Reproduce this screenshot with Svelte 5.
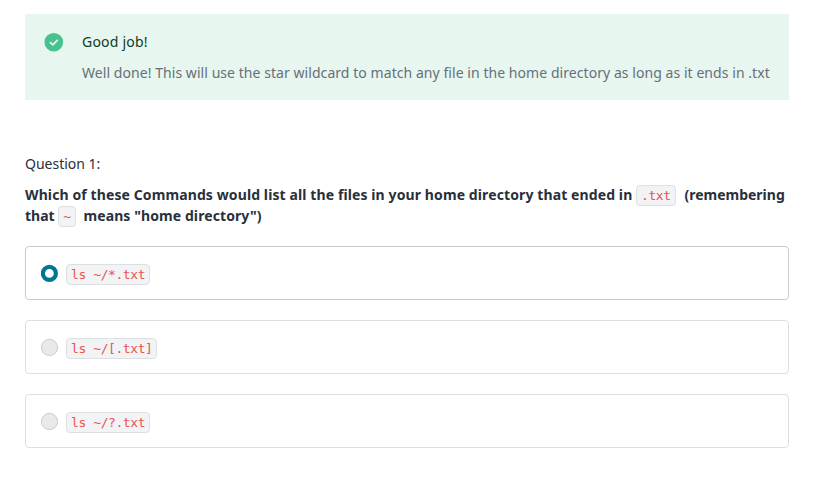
<script>
  const answers = [
    { code: 'ls ~/*.txt', selected: true },
    { code: 'ls ~/[.txt]', selected: false },
    { code: 'ls ~/?.txt', selected: false }
  ];
</script>

<main>
  <section class="feedback">
    <svg class="check" viewBox="0 0 20 20" aria-hidden="true">
      <circle cx="9.8" cy="10.2" r="9.3" fill="#46c28e" />
      <path d="M5.9 10.2 8.8 12.9 13.7 7.9" fill="none" stroke="#e7f6ef" stroke-width="1.7" />
    </svg>
    <div>
      <p class="title">Good job!</p>
      <p class="detail">Well done! This will use the star wildcard to match any file in the home directory as long as it ends in .txt</p>
    </div>
  </section>

  <p class="number">Question 1:</p>
  <p class="prompt">
    <span class="first">Which of these Commands would list all the files in your home directory that ended in</span>
    <code>.txt</code>&nbsp; <span class="after">(remembering</span><br />that <code>~</code>&nbsp; <span class="means">means "home directory")</span>
  </p>

  <div class="answers">
    {#each answers as answer}
      <div class="answer" class:selected={answer.selected}>
        <svg class="radio" viewBox="0 0 18 18" aria-hidden="true">
          {#if answer.selected}
            <circle cx="8.4" cy="9.4" r="6.5" fill="#fff" stroke="#007791" stroke-width="4.2" />
          {:else}
            <circle cx="8.5" cy="9.5" r="8.1" fill="#e8e9eb" stroke="#cacbcc" />
          {/if}
        </svg>
        <code>{answer.code}</code>
      </div>
    {/each}
  </div>
</main>

<style>
  :global(body) {
    background: #fff;
  }
  main {
    box-sizing: border-box;
    width: 828px;
    height: 484px;
    padding: 14px 39px 0 25px;
    font: 14px/21px 'Noto Sans', 'Open Sans', sans-serif;
    color: #29303b;
  }
  p {
    margin: 0;
    white-space: nowrap;
  }
  .feedback {
    display: flex;
    box-sizing: border-box;
    height: 86px;
    padding: 17px 19px 0;
    background: #e7f6ef;
  }
  .check {
    flex: none;
    width: 20px;
    height: 20px;
    margin: 1px 18px 0 0;
  }
  .title {
    color: #0c3c26;
    letter-spacing: 0.22px;
  }
  .detail {
    margin-top: 10px;
    color: #686f7a;
    letter-spacing: 0.058px;
  }
  .number {
    margin-top: 53px;
  }
  .prompt {
    margin-top: 10px;
    font-weight: 700;
  }
  .first {
    letter-spacing: 0.106px;
  }
  .after {
    margin-left: 1.5px;
  }
  .means {
    margin-left: 0.5px;
    letter-spacing: 0.09px;
  }
  code {
    display: inline-block;
    box-sizing: border-box;
    height: 21px;
    padding: 0 4px;
    border: 1px solid #dedfe0;
    border-radius: 4px;
    background: #f2f3f5;
    color: #ec5252;
    font: 400 13px/19px 'DejaVu Sans Mono', monospace;
    letter-spacing: -0.42px;
    vertical-align: top;
  }
  .prompt code {
    margin: 1px 0 -1px;
  }
  .answers {
    display: flex;
    flex-direction: column;
    gap: 20px;
    margin-top: 20px;
  }
  .answer {
    display: flex;
    align-items: center;
    box-sizing: border-box;
    height: 54px;
    padding: 2px 15px 0;
    border: 1px solid #dedfe0;
    border-radius: 4px;
  }
  .answer code {
    margin-top: 1px;
  }
  .answer.selected {
    border-color: #cacbcc;
  }
  .radio {
    flex: none;
    width: 18px;
    height: 18px;
    margin: -2px 7px 0 0;
  }
</style>
